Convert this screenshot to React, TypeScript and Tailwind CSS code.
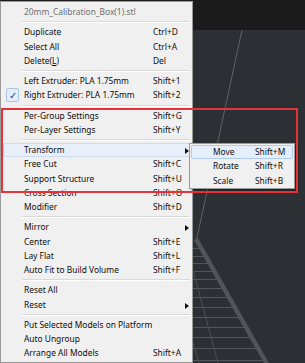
import React from "react";

type Item =
  | { kind: "sep" }
  | { kind: "title"; label: string }
  | { kind: "item"; label: React.ReactNode; shortcut?: string; arrow?: boolean; checked?: boolean; hover?: boolean };

const items: Item[] = [
  { kind: "title", label: "20mm_Calibration_Box(1).stl" },
  { kind: "sep" },
  { kind: "item", label: "Duplicate", shortcut: "Ctrl+D" },
  { kind: "item", label: "Select All", shortcut: "Ctrl+A" },
  { kind: "item", label: <>Delete(<span className="underline">L</span>)</>, shortcut: "Del" },
  { kind: "sep" },
  { kind: "item", label: "Left Extruder: PLA 1.75mm", shortcut: "Shift+1" },
  { kind: "item", label: "Right Extruder: PLA 1.75mm", shortcut: "Shift+2", checked: true },
  { kind: "sep" },
  { kind: "item", label: "Per-Group Settings", shortcut: "Shift+G" },
  { kind: "item", label: "Per-Layer Settings", shortcut: "Shift+Y" },
  { kind: "sep" },
  { kind: "item", label: "Transform", arrow: true, hover: true },
  { kind: "item", label: "Free Cut", shortcut: "Shift+C" },
  { kind: "item", label: "Support Structure", shortcut: "Shift+U" },
  { kind: "item", label: "Cross Section", shortcut: "Shift+O" },
  { kind: "item", label: "Modifier", shortcut: "Shift+D" },
  { kind: "sep" },
  { kind: "item", label: "Mirror", arrow: true },
  { kind: "item", label: "Center", shortcut: "Shift+E" },
  { kind: "item", label: "Lay Flat", shortcut: "Shift+L" },
  { kind: "item", label: "Auto Fit to Build Volume", shortcut: "Shift+F" },
  { kind: "sep" },
  { kind: "item", label: "Reset All" },
  { kind: "item", label: "Reset", arrow: true },
  { kind: "sep" },
  { kind: "item", label: "Put Selected Models on Platform" },
  { kind: "item", label: "Auto Ungroup" },
  { kind: "item", label: "Arrange All Models", shortcut: "Shift+A" },
];

const sub = [
  { label: "Move", shortcut: "Shift+M", hover: true },
  { label: "Rotate", shortcut: "Shift+R" },
  { label: "Scale", shortcut: "Shift+B" },
];

function Arrow() {
  return (
    <svg width="4" height="6" viewBox="0 0 4 6" className="absolute left-[181px] top-[4px]">
      <path d="M0 0 L4 3 L0 6 Z" fill="#111" />
    </svg>
  );
}

function Viewport() {
  const ys = [248, 256, 263, 271, 279, 288, 297, 307, 317, 327, 337, 348, 360];
  return (
    <svg className="absolute inset-0" width="305" height="363" viewBox="0 0 305 363">
      <rect x="0" y="0" width="305" height="30" fill="#1b1b1b" />
      <rect x="0" y="30" width="305" height="333" fill="#2c2f33" />
      <line x1="242" y1="30" x2="196.5" y2="240" stroke="#5f6265" strokeWidth="1" />
      {ys.map((y) => (
        <line key={y} x1="190" y1={y + 0.5} x2={196 + 0.5726 * (y - 239)} y2={y + 0.5} stroke="#54575a" strokeWidth="1" />
      ))}
      <line x1="193" y1="270" x2="218" y2="363" stroke="#4e5154" strokeWidth="1" />
      <line x1="193" y1="343" x2="199" y2="363" stroke="#4e5154" strokeWidth="1" />
      <line x1="196" y1="239" x2="267" y2="364" stroke="#525558" strokeWidth="4.5" />
    </svg>
  );
}

export default function App() {
  return (
    <div
      className="relative w-[305px] h-[363px] overflow-hidden bg-[#2c2f33] text-[8.4px] text-[#0d0d0d]"
      style={{ fontFamily: '"Noto Sans", "Open Sans", sans-serif' }}
    >
      <Viewport />

      {/* Main context menu */}
      <div className="absolute left-0 top-[1px] w-[193px] h-[362px] border border-[#9a9a9a] bg-[#f0f0f0] pt-[3px] flex flex-col">
        {items.map((it, i) => {
          if (it.kind === "sep")
            return (
              <div key={i} className="h-[6px] flex flex-col justify-center pl-[21px] pr-[2px]">
                <div className="h-px bg-[#d9d9d9]" />
                <div className="h-px bg-white" />
              </div>
            );
          if (it.kind === "title")
            return (
              <div key={i} className="h-[14.25px] leading-[14.25px] pl-[23px] text-[#6e6e6e]">
                {it.label}
              </div>
            );
          return (
            <div
              key={i}
              className={
                "relative h-[14.25px] leading-[14.25px] flex shrink-0 mx-[2px] " +
                (it.hover ? "bg-[#e9eff8] border border-[#c9dcf2] rounded-[2px]" : "border border-transparent")
              }
            >
              {it.checked && (
                <div className="absolute left-[2px] top-[-1px] w-[13px] h-[14px] border border-[#a7c6ea] bg-[#e3eefc] rounded-[2px] flex items-center justify-center text-[#22449a] text-[10px] leading-none">
                  ✓
                </div>
              )}
              <span className="pl-[20px] w-[149px] shrink-0 whitespace-nowrap -mt-px">{it.label}</span>
              {it.shortcut && <span className="whitespace-nowrap -mt-px">{it.shortcut}</span>}
              {it.arrow && <Arrow />}
            </div>
          );
        })}
      </div>

      {/* Submenu */}
      <div className="absolute left-[189px] top-[143px] w-[106px] h-[46px] border border-[#9a9a9a] bg-[#f0f0f0] p-px pt-[1px] flex flex-col shadow-[2px_2px_2px_rgba(0,0,0,0.25)]">
        {sub.map((s) => (
          <div
            key={s.label}
            className={
              "flex h-[14.25px] leading-[14.25px] " +
              (s.hover ? "bg-[#e6eefb] border border-[#aecbf0] rounded-[2px]" : "border border-transparent")
            }
          >
            <span className="pl-[21px] w-[63px] shrink-0 -mt-px">{s.label}</span>
            <span className="-mt-px">{s.shortcut}</span>
          </div>
        ))}
      </div>

      {/* Red annotation rectangle */}
      <div className="absolute left-[1px] top-[108px] w-[297px] h-[85px] border-2 border-[#e2333b] pointer-events-none" />
    </div>
  );
}
